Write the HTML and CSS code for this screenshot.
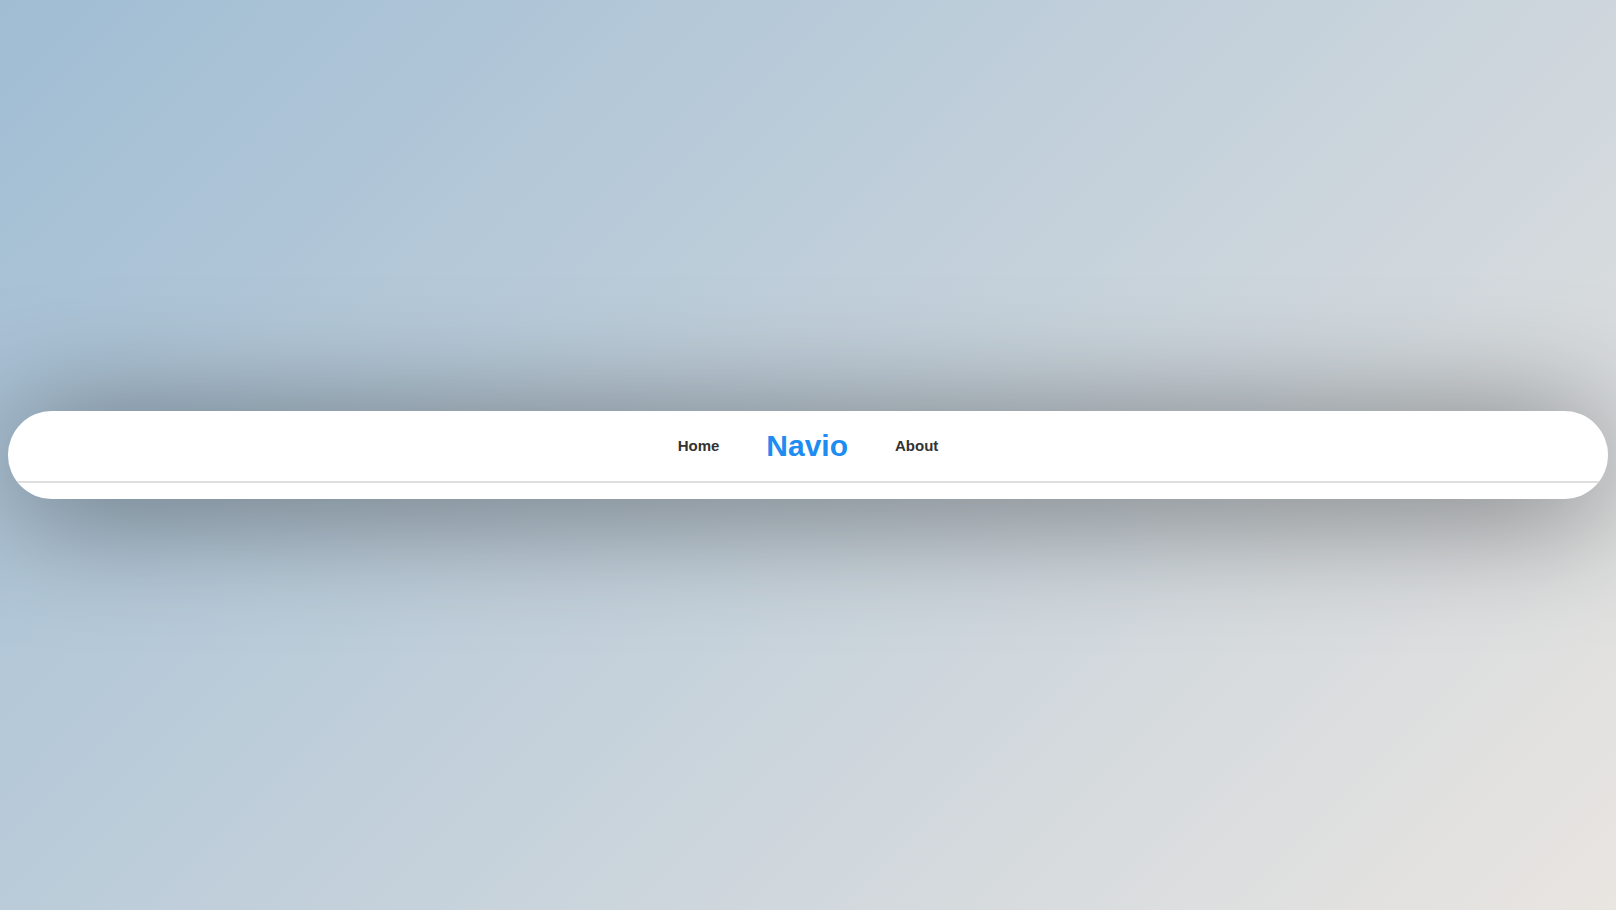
FILE: index.html
```html
<!DOCTYPE html>
<html lang="en">
<head>
<meta charset="utf-8">
<title>Navio</title>
<link rel="stylesheet" href="styles.css">
</head>
<body>
<div class="page">
  <nav class="navbar">
    <div class="nav-inner">
      <ul class="nav-list">
        <li><a class="nav-link" href="#">Home</a></li>
        <li><a class="brand" href="#">Navio</a></li>
        <li><a class="nav-link" href="#">About</a></li>
      </ul>
    </div>
  </nav>
</div>
</body>
</html>
```
FILE: styles.css
```css
html,
body {
  margin: 0;
  height: 100%;
}
body {
  background: linear-gradient(135deg, #a0bdd4 0%, #c4d1db 50%, #e9e5e1 100%);
  font-family: "Liberation Sans", Arial, sans-serif;
}
.page {
  box-sizing: border-box;
  height: 100%;
  padding: 0 8px;
  display: flex;
  align-items: center;
}
.navbar {
  flex: 1;
  border-radius: 44px;
  box-shadow: 0 10px 120px rgba(0, 0, 0, 0.5);
}
.nav-inner {
  background: #fff;
  border-radius: 44px;
  overflow: hidden;
  padding-bottom: 16px;
}
.nav-list {
  list-style: none;
  margin: 0;
  padding: 0;
  height: 70px;
  display: flex;
  align-items: center;
  justify-content: center;
  gap: 47px;
  border-bottom: 2px solid #dedede;
}
.nav-link {
  font-size: 15px;
  font-weight: bold;
  color: #333;
  text-decoration: none;
}
.brand {
  font-size: 30px;
  font-weight: bold;
  color: #1e8cf0;
  text-decoration: none;
}
```
